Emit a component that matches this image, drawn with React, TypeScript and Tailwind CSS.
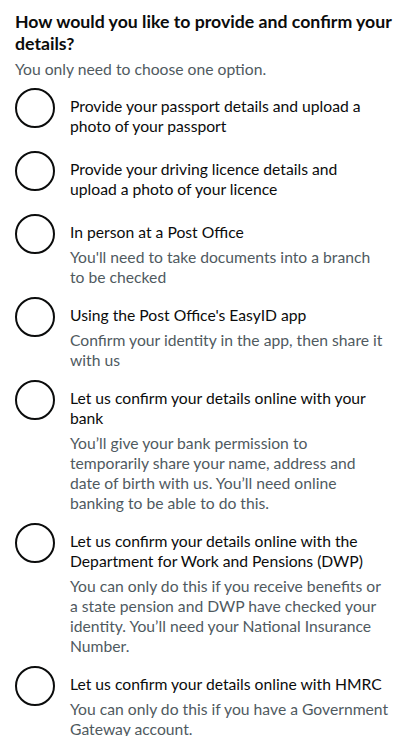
import React from "react";

const items: { label: string; hint?: string; wide?: boolean }[] = [
  { label: "Provide your passport details and upload a photo of your passport" },
  { label: "Provide your driving licence details and upload a photo of your licence" },
  { label: "In person at a Post Office", hint: "You'll need to take documents into a branch to be checked" },
  { label: "Using the Post Office's EasyID app", hint: "Confirm your identity in the app, then share it with us" },
  {
    label: "Let us confirm your details online with your bank",
    hint: "You\u2019ll give your bank permission to temporarily share your name, address and date of birth with us. You\u2019ll need online banking to be able to do this.",
  },
  {
    label: "Let us confirm your details online with the Department for Work and Pensions (DWP)",
    hint: "You can only do this if you receive benefits or a state pension and DWP have checked your identity. You\u2019ll need your National Insurance Number.",
  },
  {
    label: "Let us confirm your details online with HMRC",
    hint: "You can only do this if you have a Government Gateway account.",
    wide: true,
  },
];

export default function App() {
  return (
    <div
      className="min-h-[736px] w-[414px] bg-white px-[15px] pt-[11px] text-[#0b0c0c]"
      style={{ fontFamily: 'Lato, Arial, sans-serif' }}
    >
      <fieldset>
        <legend className="text-[17.7px] font-bold leading-[22px]">
          How would you like to provide and confirm your details?
        </legend>
        <div className="mt-[4px] mb-[9px] text-[15.7px] leading-[20px] text-[#505a5f]">
          You only need to choose one option.
        </div>
        <div className="flex flex-col">
          {items.map((it, i) => (
            <div key={i} className="mb-[10px] flex">
              <div className="h-[40px] w-[40px] shrink-0 rounded-full border-2 border-[#0b0c0c]" />
              <div className="min-w-0 flex-1 px-[15px]">
                <div className="pt-[8px] pb-[5px] text-[15.7px] leading-[20px]">{it.label}</div>
                {it.hint && (
                  <div
                    className={
                      it.wide
                        ? "mr-[-8px] text-[15.7px] leading-[20px] text-[#505a5f]"
                        : "text-[15.7px] leading-[20px] text-[#505a5f]"
                    }
                  >
                    {it.hint}
                  </div>
                )}
              </div>
            </div>
          ))}
        </div>
      </fieldset>
    </div>
  );
}
